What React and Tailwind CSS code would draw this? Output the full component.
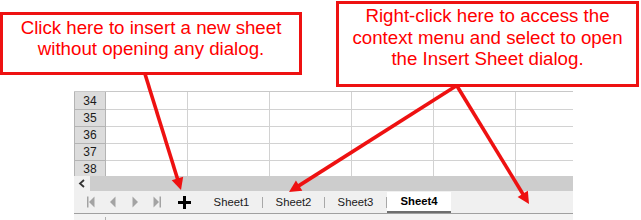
import React from "react";

const RED = "#ee1111";

function Arrow({ x1, y1, x2, y2 }) {
  const dx = x2 - x1;
  const dy = y2 - y1;
  const L = Math.hypot(dx, dy);
  const ux = dx / L;
  const uy = dy / L;
  const hl = 12;
  const hw = 6;
  const bx = x2 - ux * hl;
  const by = y2 - uy * hl;
  const nx = -uy;
  const ny = ux;
  return (
    <g>
      <line x1={x1} y1={y1} x2={bx + ux * 2} y2={by + uy * 2} stroke={RED} strokeWidth="3.6" />
      <polygon
        points={`${x2},${y2} ${bx + nx * hw},${by + ny * hw} ${bx - nx * hw},${by - ny * hw}`}
        fill={RED}
      />
    </g>
  );
}

function Row({ n, first }) {
  return (
    <div className={`flex ${first ? "h-[18px]" : "h-[17px]"} shrink-0`}>
      <div className="w-[32px] shrink-0 bg-[#dcdcdc] border-l border-r border-b border-[#b4b4b4] flex items-center justify-center text-[12px] text-[#1a1a1a]">
        {n}
      </div>
      {[0, 1, 2, 3, 4].map((i) => (
        <div key={i} className="w-[82px] shrink-0 border-r border-b border-[#d2d2d2]" />
      ))}
      <div className="flex-1 border-b border-[#d2d2d2]" />
    </div>
  );
}

function NavIcon({ kind }) {
  const c = "#a3a3a3";
  return (
    <div className="w-[22px] h-full flex items-center justify-center">
      <svg width="10" height="12" viewBox="0 0 10 12">
        {kind === "first" && (
          <>
            <rect x="1" y="0.5" width="1.5" height="11" fill={c} />
            <polygon points="8.5,0.5 3,6 8.5,11.5" fill={c} />
          </>
        )}
        {kind === "prev" && <polygon points="7.5,0.5 2,6 7.5,11.5" fill={c} />}
        {kind === "next" && <polygon points="2.5,0.5 8,6 2.5,11.5" fill={c} />}
        {kind === "last" && (
          <>
            <polygon points="1.5,0.5 7,6 1.5,11.5" fill={c} />
            <rect x="7.5" y="0.5" width="1.5" height="11" fill={c} />
          </>
        )}
      </svg>
    </div>
  );
}

function Sep() {
  return <div className="w-px h-[11px] bg-[#a8a8a8] shrink-0" />;
}

export default function App() {
  return (
    <div
      className="relative w-[641px] h-[220px] bg-white overflow-hidden"
      style={{ fontFamily: '"Liberation Sans", Arial, sans-serif' }}
    >
      <div className="pt-[91px] pl-[74px]">
        <div className="w-[499px] flex flex-col">
          {/* grid */}
          <div className="h-[85px] overflow-hidden flex flex-col border-t border-[#c8c8c8]">
            <Row n="34" first />
            <Row n="35" />
            <Row n="36" />
            <Row n="37" />
            <Row n="38" />
          </div>
          {/* scrollbar */}
          <div className="h-[15px] flex">
            <div className="w-[16px] bg-[#f0f0f0] flex items-center justify-center">
              <svg width="8" height="9" viewBox="0 0 8 9">
                <polyline points="6,1 2,4.5 6,8" fill="none" stroke="#333" strokeWidth="1.8" />
              </svg>
            </div>
            <div className="flex-1 bg-[#cdcdcd]" />
          </div>
          {/* tab bar */}
          <div className="h-[23px] bg-[#f0f0f0] border-b border-[#a0a0a0] flex items-center pl-[6px] text-[11.3px] text-[#1a1a1a]">
            <NavIcon kind="first" />
            <NavIcon kind="prev" />
            <NavIcon kind="next" />
            <NavIcon kind="last" />
            <div className="w-[33px] h-full flex items-center justify-center">
              <svg width="13" height="13" viewBox="0 0 13 13">
                <rect x="5" y="0" width="3" height="13" fill="#000" />
                <rect x="0" y="5" width="13" height="3" fill="#000" />
              </svg>
            </div>
            <div className="w-[61px] text-center">Sheet1</div>
            <Sep />
            <div className="w-[61px] text-center">Sheet2</div>
            <Sep />
            <div className="w-[61px] text-center">Sheet3</div>
            <Sep />
            <div className="w-[64px] self-stretch mt-px bg-white border-b-2 border-[#6e6e6e] flex items-center justify-center font-bold text-black">
              Sheet4
            </div>
          </div>
          <div className="h-[6px] bg-[#f3f3f3] flex">
            <div className="w-[31px]" />
            <div className="w-px h-[3px] mt-[3px] bg-[#b0b0b0]" />
          </div>
        </div>
      </div>

      {/* callout 1 */}
      <div className="absolute left-0 top-[12px] w-[302px] h-[63px] border-[3px] border-[#ee1111] bg-white pt-[2px] text-center text-[18.7px] leading-[21px] text-[#ff0000]">
        Click here to insert a new sheet
        <br />
        without opening any dialog.
      </div>

      {/* callout 2 */}
      <div className="absolute left-[336px] top-[1px] w-[303px] h-[86px] border-[3px] border-[#ee1111] bg-white pt-[1px] text-center text-[18.7px] leading-[21.5px] text-[#ff0000]">
        Right-click here to access the
        <br />
        context menu and select to open
        <br />
        the Insert Sheet dialog.
      </div>

      <svg className="absolute left-0 top-0 pointer-events-none" width="641" height="220" viewBox="0 0 641 220">
        <Arrow x1={145} y1={74} x2={181} y2={190} />
        <Arrow x1={456} y1={86} x2={289} y2={192} />
        <Arrow x1={457} y1={86} x2={529} y2={204} />
      </svg>
    </div>
  );
}
